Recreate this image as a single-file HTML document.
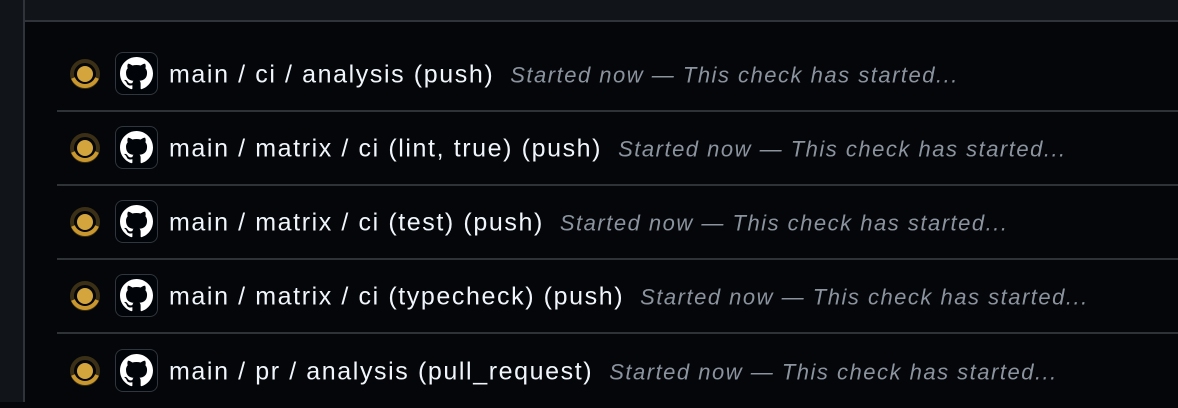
<!DOCTYPE html>
<html><head><style>
body{margin:0;width:1178px;height:402px;background:#05060a;position:relative;overflow:hidden;font-family:"Liberation Sans",sans-serif}
.left{position:absolute;left:0;top:0;width:23px;height:402px;background:#111419}
.vb{position:absolute;left:23px;top:0;width:2px;height:402px;background:#30343a}
.top{position:absolute;left:25px;top:0;right:0;height:20px;background:#111419}
.hb{position:absolute;left:25px;top:20px;right:0;height:2px;background:#30343a}
.row{position:absolute;left:57px;right:0;height:74px;border-bottom:2px solid #2f3338;box-sizing:border-box}
.sp{position:absolute;left:12px;top:50%;margin-top:-16px}
.gh{position:absolute;left:58px;top:50%;margin-top:-22px;width:41px;height:41px;border:1.5px solid #30363d;border-radius:8px;background:#010409}
.gh svg{position:absolute;left:4px;top:4px}
.t{position:absolute;left:112px;top:50%;margin-top:1px;transform:translateY(-50%);color:#f0f6fc;font-size:25px;letter-spacing:1.6px;white-space:nowrap}
.t i{color:#8b949e;font-size:22px;letter-spacing:1.5px;margin-left:16px}
</style></head><body>
<div class="left"></div><div class="vb"></div><div class="top"></div><div class="hb"></div>
<svg width="0" height="0" style="position:absolute"><defs><path id="g" fill="#fff" d="M8 0C3.58 0 0 3.58 0 8c0 3.54 2.29 6.53 5.47 7.590.4.07.55-.17.55-.38 0-.19-.01-.82-.01-1.49-2.01.37-2.53-.49-2.69-.94-.09-.23-.48-.94-.82-1.13-.28-.15-.68-.52-.01-.53.63-.01 1.08.58 1.23.82.72 1.21 1.87.87 2.33.66.07-.52.28-.87.51-1.07-1.78-.2-3.64-.89-3.64-3.95 0-.87.31-1.590.82-2.15-.08-.2-.36-1.02.08-2.12 0 0 .67-.21 2.2.82.64-.18 1.32-.27 2-.27.68 0 1.36.09 2 .27 1.53-1.04 2.2-.82 2.2-.82.44 1.1.16 1.92.08 2.12.51.56.82 1.27.82 2.15 0 3.07-1.87 3.75-3.65 3.95.29.25.54.73.54 1.48 0 1.07-.01 1.93-.01 2.2 0 .21.15.46.55.38A8.013 8.013 0 0016 8c0-4.42-3.58-8-8-8z"/><g id="s"><circle cx="16" cy="16" r="13" fill="none" stroke="#3b3016" stroke-width="4"/><path d="M4 20 A13 13 0 0 0 28 20" fill="none" stroke="#c9972e" stroke-width="4"/><circle cx="16" cy="16" r="8" fill="#d4a53c"/></g></defs></svg>
<div class="row" style="top:38px"><svg class="sp" width="32" height="32" viewBox="0 0 32 32"><use href="#s"/></svg><div class="gh"><svg width="33" height="33" viewBox="0 0 16 16"><use href="#g"/></svg></div><div class="t">main / ci / analysis (push)<i>Started now — This check has started...</i></div></div>
<div class="row" style="top:112px"><svg class="sp" width="32" height="32" viewBox="0 0 32 32"><use href="#s"/></svg><div class="gh"><svg width="33" height="33" viewBox="0 0 16 16"><use href="#g"/></svg></div><div class="t">main / matrix / ci (lint, true) (push)<i>Started now — This check has started...</i></div></div>
<div class="row" style="top:186px"><svg class="sp" width="32" height="32" viewBox="0 0 32 32"><use href="#s"/></svg><div class="gh"><svg width="33" height="33" viewBox="0 0 16 16"><use href="#g"/></svg></div><div class="t">main / matrix / ci (test) (push)<i>Started now — This check has started...</i></div></div>
<div class="row" style="top:260px"><svg class="sp" width="32" height="32" viewBox="0 0 32 32"><use href="#s"/></svg><div class="gh"><svg width="33" height="33" viewBox="0 0 16 16"><use href="#g"/></svg></div><div class="t">main / matrix / ci (typecheck) (push)<i>Started now — This check has started...</i></div></div>
<div class="row" style="top:334px;border-bottom:none"><svg class="sp" width="32" height="32" viewBox="0 0 32 32"><use href="#s"/></svg><div class="gh"><svg width="33" height="33" viewBox="0 0 16 16"><use href="#g"/></svg></div><div class="t">main / pr / analysis (pull_request)<i>Started now — This check has started...</i></div></div>
</body></html>
